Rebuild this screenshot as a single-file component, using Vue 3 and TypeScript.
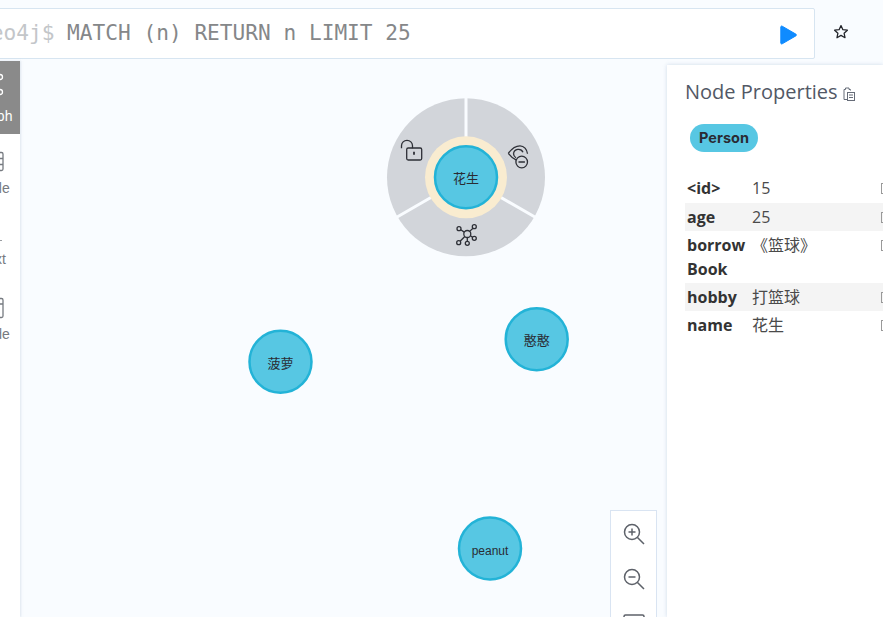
<script setup lang="ts">
const sideItems = [
  { label: 'Graph', active: true, cls: 'graph' },
  { label: 'Table', active: false, cls: 'table' },
  { label: 'Text', active: false, cls: 'text' },
  { label: 'Code', active: false, cls: 'code' },
]
const props = [
  { k: '<id>', v: '15', alt: false },
  { k: 'age', v: '25', alt: true },
  { k: 'borrowBook', v: '《篮球》', alt: false },
  { k: 'hobby', v: '打篮球', alt: true },
  { k: 'name', v: '花生', alt: false },
]
const nodes = [
  { x: 260.5, y: 300.7, t: '菠萝', cjk: true },
  { x: 516.7, y: 278.3, t: '憨憨', cjk: true },
  { x: 470, y: 487.5, t: 'peanut', cjk: false },
]
</script>

<template>
  <div class="app">
    <header class="top">
      <div class="editor">
        <div class="code-line"><span class="prompt">neo4j$</span> MATCH (n) RETURN n LIMIT 25</div>
        <svg class="play" width="18" height="22" viewBox="0 0 18 22">
          <path d="M2.2 2.2 15.8 10.100a1 1 0 0 1 0 1.800L2.200 19.800a.9.9 0 0 1-1.400-.8V3a.9.9 0 0 1 1.400-.8Z" fill="#0f8bff" stroke="#0f8bff" stroke-width="1" stroke-linejoin="round" />
        </svg>
      </div>
      <svg class="star" width="16" height="16" viewBox="0 0 16 16">
        <path d="M8 1.600 9.900 5.700l4.500.5-3.300 3 .9 4.500L8 11.400l-4 2.300.9-4.500-3.300-3 4.500-.5Z" fill="none" stroke="#23252b" stroke-width="1.300" stroke-linejoin="round" />
      </svg>
    </header>

    <div class="body">
      <nav class="side">
        <div v-for="it in sideItems" :key="it.label" class="side-item" :class="[it.cls, { active: it.active }]">
          <svg v-if="it.cls === 'graph'" class="side-icon" width="24" height="24" viewBox="0 0 24 24" fill="none" stroke="#fff" stroke-width="1.300">
            <circle cx="12" cy="11.500" r="3" /><circle cx="20" cy="4" r="2.500" /><circle cx="20" cy="19" r="2.500" />
            <path d="m14.500 9.500 3.600-3.800M14.500 13.500l3.600 3.800" />
          </svg>
          <svg v-else-if="it.cls === 'table'" class="side-icon" width="24" height="24" viewBox="0 0 24 24" fill="none" stroke="#767a80" stroke-width="1.300">
            <rect x="3" y="2.500" width="19" height="18" rx="1.500" /><path d="M3 8.500h19M3 14.500h19M13 3v17" />
          </svg>
          <svg v-else-if="it.cls === 'text'" class="side-icon" width="24" height="24" viewBox="0 0 24 24" fill="none" stroke="#9a9da1" stroke-width="1.200">
            <path d="M3 19.500h18" />
          </svg>
          <svg v-else class="side-icon" width="24" height="24" viewBox="0 0 24 24" fill="none" stroke="#767a80" stroke-width="1.300">
            <rect x="3" y="2.500" width="19" height="19" rx="1.500" /><path d="M3 8h19M15 1v3M7 1v3" />
          </svg>
          <span class="side-label">{{ it.label }}</span>
        </div>
      </nav>

      <main class="canvas">
        <svg class="graph-svg" width="646" height="556" viewBox="0 0 646 556">
          <g transform="translate(446 116.300)">
            <circle r="79" fill="#d2d5da" />
            <path d="M0 0V-80M0 0 69.300 40M0 0-69.300 40" stroke="#f9fcff" stroke-width="3" />
            <circle r="41" fill="#f9ecd0" />
            <circle r="31" fill="#57c7e3" stroke="#23b3d7" stroke-width="2.500" />
            <text class="node-text cjk" y="5.500">花生</text>
            <g fill="none" stroke="#2d2f36" stroke-width="1.300" stroke-linejoin="round">
              <rect x="-59.300" y="-29.300" width="15" height="12" rx="1.500" />
              <path d="M-64.500-29v-2.500a5.500 5.500 0 0 1 11 0v2.500" />
              <path d="M-52-25.500v3" stroke-width="1.800" />

              <path d="M42.300-24C46-29 50-31.500 54-31.500c4 0 7 3.500 7.500 8" />
              <path d="M42.300-24C45-20.500 47.500-18.500 50-17.500" />
              <path d="M47.500-23.500a5 5 0 0 1 9.500-1.500" />
              <path d="M47.500-23.500a5 5 0 0 0 2.500 4" />
              <circle cx="55.700" cy="-15.300" r="5.800" />
              <path d="M52.500-15.300h6.400" stroke-width="1.500" />

              <g transform="translate(1.300 56.700)">
                <circle r="3.500" />
                <circle cx="-8.300" cy="-5.300" r="2" /><circle cx="7" cy="-7.300" r="2" />
                <circle cx="-8.600" cy="8.700" r="2" /><circle cx="0" cy="9.300" r="2" /><circle cx="7" cy="4.300" r="2" />
                <path d="m-3-1.900-3.600-2.300M2.300-2.600l3.400-3.200M-2.500 2.500-7.200 7.300M0 3.500v3.800M3.100 1.800l2.100 1.300" />
              </g>
            </g>
          </g>
          <g v-for="n in nodes" :key="n.t" :transform="`translate(${n.x} ${n.y})`">
            <circle r="31" fill="#57c7e3" stroke="#23b3d7" stroke-width="2.500" />
            <text class="node-text" :class="{ cjk: n.cjk }" y="6">{{ n.t }}</text>
          </g>
        </svg>

        <div class="zoom">
          <svg width="24" height="24" viewBox="0 0 24 24" fill="none" stroke="#5d6169" stroke-width="1.500">
            <circle cx="10" cy="10" r="7.500" /><path d="m15.500 15.500 6.500 6.500M6.500 10h7M10 6.500v7" />
          </svg>
          <svg width="24" height="24" viewBox="0 0 24 24" fill="none" stroke="#5d6169" stroke-width="1.500">
            <circle cx="10" cy="10" r="7.500" /><path d="m15.500 15.500 6.500 6.500M6.500 10h7" />
          </svg>
          <svg width="24" height="24" viewBox="0 0 24 24" fill="none" stroke="#5d6169" stroke-width="1.500">
            <path d="M2 8V4.500A1.500 1.500 0 0 1 3.500 3h17A1.500 1.500 0 0 1 22 4.500V8M2 16v2.500M22 16v2.500M8 8h8" />
          </svg>
        </div>
      </main>

      <aside class="panel">
        <h2 class="title">
          Node Properties
          <svg width="14" height="14" viewBox="0 0 14 14" fill="none" stroke="#666c78" stroke-width="1">
            <path d="M8.500 3.500v-1H7V1H3.500v1.500H2v10h3" /><rect x="5.500" y="5.500" width="7" height="8" /><path d="M7 8h4M7 10.500h4" />
          </svg>
        </h2>
        <div class="pill">Person</div>
        <div class="rows">
          <div v-for="p in props" :key="p.k" class="row" :class="{ alt: p.alt }">
            <div class="key">{{ p.k }}</div>
            <div class="val">{{ p.v }}</div>
            <div class="copy"></div>
          </div>
        </div>
      </aside>
    </div>
  </div>
</template>

<style>
html, body { margin: 0; background: #f9fcff; }
</style>

<style scoped>
.app {
  width: 883px;
  height: 617px;
  overflow: hidden;
  display: flex;
  flex-direction: column;
  background: #f9fcff;
}
.top {
  height: 61px;
  flex: none;
  box-sizing: border-box;
  padding-top: 8px;
  display: flex;
  align-items: flex-start;
  overflow: hidden;
}
.editor {
  width: 838px;
  margin-left: -23px;
  height: 51px;
  flex: none;
  box-sizing: border-box;
  background: #fff;
  border: 1px solid #d7e5f1;
  border-radius: 2px;
  display: flex;
  align-items: center;
  justify-content: space-between;
  padding-right: 16px;
}
.code-line {
  font-family: "DejaVu Sans Mono", "Liberation Mono", monospace;
  font-size: 21.150px;
  color: #858789;
  white-space: pre;
  margin-top: -2px;
}
.prompt { color: #c3c6c9; }
.play { margin-top: 2px; }
.star { margin: 16px 0 0 18px; flex: none; }
.body {
  flex: 1;
  min-height: 0;
  display: flex;
}
.side {
  width: 54px;
  margin-left: -34px;
  flex: none;
  background: #fff;
  box-shadow: 1px 0 2px rgba(200, 212, 225, .55);
  z-index: 2;
  overflow: hidden;
}
.side-item {
  display: flex;
  flex-direction: column;
  align-items: center;
  box-sizing: border-box;
  padding-top: 16px;
  font-family: "Liberation Sans", Arial, sans-serif;
  font-size: 14px;
  color: #767a80;
}
.side-item.graph { height: 73px; background: #8a8a8a; color: #fff; padding-top: 12px; }
.side-item.table { height: 71px; }
.side-item.text { height: 75px; }
.side-item.code { height: 75px; }
.side-label { margin-top: 7px; line-height: 15px; }
.side-item.graph .side-label { margin-top: 12px; }
.side-item.graph .side-icon { transform: translateX(-1px); }
.canvas {
  flex: 1;
  position: relative;
  min-width: 0;
}
.graph-svg { display: block; }
.node-text {
  font-family: "Liberation Sans", "Noto Sans CJK SC", sans-serif;
  font-size: 12px;
  text-anchor: middle;
  fill: #2a2c33;
}
.node-text.cjk { font-size: 13px; }
.zoom {
  position: absolute;
  left: 590px;
  top: 449px;
  width: 47px;
  height: 130px;
  box-sizing: border-box;
  background: #fff;
  border: 1px solid #d9e4f2;
  display: flex;
  flex-direction: column;
  align-items: center;
  gap: 21px;
  padding-top: 11px;
}
.panel {
  width: 216px;
  flex: none;
  margin-top: 4px;
  box-sizing: border-box;
  background: #fff;
  box-shadow: 0 0 4px rgba(190, 205, 222, .7);
  padding: 0 0 0 18px;
  font-family: "Open Sans", "Noto Sans CJK SC", sans-serif;
  z-index: 2;
  overflow: hidden;
}
.title {
  margin: 13px 0 0;
  font-size: 20px;
  line-height: 28px;
  font-weight: 400;
  color: #525865;
  display: flex;
  align-items: center;
  gap: 4px;
  white-space: nowrap;
}
.title svg { margin-top: 4px; }
.pill {
  margin: 18px 0 0 5px;
  width: 68px;
  height: 28px;
  border-radius: 14px;
  background: #57c7e3;
  color: #2a2c33;
  font-family: Inter, "Liberation Sans", sans-serif;
  font-weight: 700;
  font-size: 14.500px;
  line-height: 28px;
  text-align: center;
}
.rows { margin-top: 23px; width: 198px; }
.row {
  display: grid;
  grid-template-columns: 65px 1fr 8px;
  box-sizing: border-box;
  padding: 2px 0 2px 2px;
  font-size: 16px;
  line-height: 24px;
  color: #333;
  min-height: 28px;
  word-break: break-all;
}
.row:first-child { padding-top: 1px; padding-bottom: 3px; }
.row.alt { background: #f4f4f4; }
.key { font-weight: 700; color: #333; width: 62px; }
.val { color: #4a4a4a; }
.copy {
  width: 8px;
  height: 11px;
  box-sizing: border-box;
  border: 1px solid #9a9a9a;
  margin-top: 7px;
  margin-left: 6px;
}
</style>
